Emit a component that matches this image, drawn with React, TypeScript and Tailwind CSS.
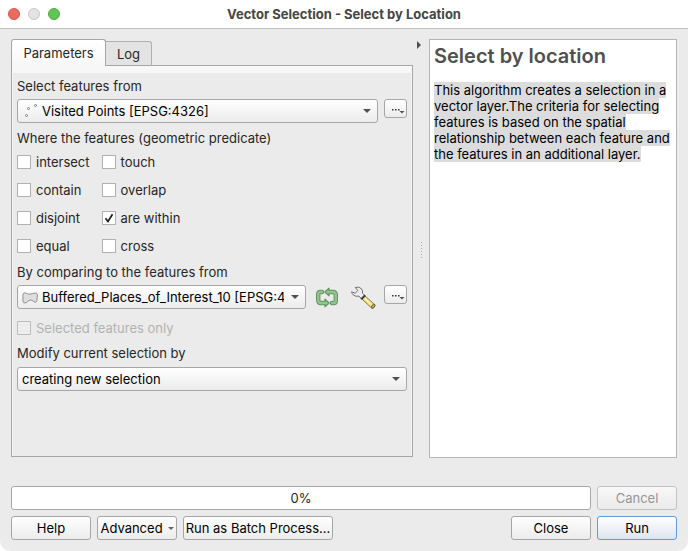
import { useState } from "react";
import type { ButtonHTMLAttributes, ReactNode, SelectHTMLAttributes } from "react";

const face = "rounded-[3px] border border-[#a6a6a6] bg-linear-to-b from-white to-[#ececec]";

function PushButton({ className = "", children, ...rest }: ButtonHTMLAttributes<HTMLButtonElement>) {
  return (
    <button
      type="button"
      className={`flex h-6 shrink-0 items-center justify-center whitespace-nowrap rounded-[3px] border ${className}`}
      {...rest}
    >
      {children}
    </button>
  );
}

function Caret({ className }: { className: string }) {
  return (
    <svg viewBox="0 0 8 4" className={className} aria-hidden="true">
      <path d="M0 0h8L4 4z" fill="currentColor" />
    </svg>
  );
}

function ComboBox({
  icon,
  options,
  className = "",
  ...rest
}: { icon?: ReactNode; options: string[] } & SelectHTMLAttributes<HTMLSelectElement>) {
  return (
    <div className={`relative min-w-0 flex-1 ${className}`}>
      <select
        className={`block h-6 w-full appearance-none pr-[21px] text-black ${icon ? "pl-6" : "pl-1"} ${face}`}
        {...rest}
      >
        {options.map((option) => (
          <option key={option}>{option}</option>
        ))}
      </select>
      {icon && <span className="pointer-events-none absolute inset-y-0 left-1 flex items-center">{icon}</span>}
      <Caret className="pointer-events-none absolute top-[10px] right-[7px] h-1 w-2 text-[#505050]" />
    </div>
  );
}

function MoreButton({ label }: { label: string }) {
  return (
    <button
      type="button"
      aria-label={label}
      className={`flex h-[19px] w-[23px] shrink-0 items-center justify-end pr-px ${face}`}
    >
      <svg viewBox="0 0 14 7" className="mt-[6px] h-[7px] w-[14px]" aria-hidden="true">
        <path d="M1 1h1.500v1.500H1zM4 1h1.500v1.500H4zM7 1h1.500v1.500H7z" fill="#333" />
        <path d="M8.500 3h5L11 5.500z" fill="#505050" />
      </svg>
    </button>
  );
}

function CheckBox({
  label,
  defaultChecked = false,
  disabled = false,
}: {
  label: string;
  defaultChecked?: boolean;
  disabled?: boolean;
}) {
  return (
    <label className={`relative flex h-4 items-center gap-[5px] whitespace-nowrap ${disabled ? "text-[#b2b2b2]" : ""}`}>
      <input
        type="checkbox"
        defaultChecked={defaultChecked}
        disabled={disabled}
        className="peer size-[14px] shrink-0 appearance-none border border-[#b0b0b0] bg-white disabled:border-[#bdbdbd] disabled:bg-[#ededed]"
      />
      <svg
        viewBox="0 0 14 14"
        className="pointer-events-none absolute top-px left-0 hidden size-[14px] peer-checked:block"
        fill="none"
        stroke="#222"
        strokeWidth="1.8"
        aria-hidden="true"
      >
        <path d="M3.500 7.200 6 10.500 10.500 3.200" />
      </svg>
      <span>{label}</span>
    </label>
  );
}

function PointsIcon() {
  return (
    <svg viewBox="0 0 16 16" className="size-4" fill="#f6f6f6" stroke="#777" strokeWidth="0.9" aria-hidden="true">
      <circle cx="5.500" cy="12.500" r="1" />
      <circle cx="7.500" cy="5.500" r="1" />
      <circle cx="14.500" cy="2.500" r="1" />
    </svg>
  );
}

function PolygonIcon() {
  return (
    <svg viewBox="0 0 18 14" className="h-[14px] w-[18px]" aria-hidden="true">
      <path
        d="M3.200 2C5 1.500 6 3.200 8.500 3.200S12.500 2 14.500 2s2.200 2.500 1.700 4.500.3 4.500-1.700 4.700-2.700-2.400-5-2.200S6.200 12 3.800 12 2 9.500 2 7 1.200 2.600 3.200 2z"
        fill="#dedede"
        stroke="#858585"
        strokeWidth="0.9"
      />
    </svg>
  );
}

function IterateIcon() {
  return (
    <svg viewBox="0 0 24 22" className="h-[22px] w-6" strokeLinejoin="round" aria-hidden="true">
      <g fill="none" stroke="#5f9460" strokeWidth="4.400" strokeLinecap="round">
        <path d="M7 5H5.500Q3.200 5 3.200 7.300v5.400Q3.200 16 6 16h5" />
        <path d="M17 16h1.500q2.300 0 2.300-2.300V8.300Q20.800 5 18 5h-5" />
      </g>
      <path d="M9.800 5 14 1.200V8.800zM14.200 16 10 12.200v7.600z" fill="#93c490" stroke="#5f9460" strokeWidth="1.200" />
      <g fill="none" stroke="#93c490" strokeWidth="2.400" strokeLinecap="round">
        <path d="M7 5H5.500Q3.200 5 3.200 7.300v5.400Q3.200 16 6 16h5" />
        <path d="M17 16h1.500q2.300 0 2.300-2.300V8.300Q20.800 5 18 5h-5" />
      </g>
    </svg>
  );
}

function WrenchIcon() {
  return (
    <svg viewBox="0 0 26 24" className="h-6 w-[26px]" strokeLinejoin="round" aria-hidden="true">
      <path d="M11.500 12.500 14.500 9.500 24.500 18.500q.8 1.200-.4 2.600-1.300 1.400-2.600.9z" fill="#efdf86" stroke="#857a48" strokeWidth="1" />
      <path d="M22 22.200q-1.500-1.500.2-3.200 1.200-1.100 2.500-.5.800 1.300-.5 2.800-1.100 1.200-2.200.9z" fill="#c6ae59" stroke="#55502f" strokeWidth="0.900" />
      <path
        d="M5.200 1.500Q9.200.2 11.500 2.800q1.500 2 1 4.500l2.500 2.500-3.300 3.300-2.700-3Q5.800 11 3.300 9 1.800 7.600 1.600 5.800l3.600 1.400 2.700-2.600z"
        fill="#ededeb"
        stroke="#6f6f6f"
        strokeWidth="1"
      />
      <path d="M11.200 13.200 15.200 9.300" stroke="#3e3e3e" strokeWidth="2" />
      <path d="m15 12.500 7 6.500" stroke="#fff3b2" strokeWidth="1.200" />
    </svg>
  );
}

const predicates = ["intersect", "touch", "contain", "overlap", "disjoint", "are within", "equal", "cross"];

export default function App() {
  const [tab, setTab] = useState("Parameters");

  return (
    <div className="flex min-h-screen flex-col bg-white font-['Inter','Liberation_Sans',sans-serif] text-[13px] leading-4 text-[#262626]">
      <header className="grid h-[29px] shrink-0 grid-cols-[1fr_auto_1fr] items-center border-b border-[#c2c2c2] bg-white px-2">
        <div className="flex gap-2">
          <button type="button" aria-label="Close window" className="size-3 rounded-full border border-[#d9534a] bg-[#ed6a5e]" />
          <button type="button" aria-label="Minimize" disabled className="size-3 rounded-full border border-[#c9c9c9] bg-[#e3e3e3]" />
          <button type="button" aria-label="Zoom" className="size-3 rounded-full border border-[#52a842] bg-[#61c554]" />
        </div>
        <h1 className="font-bold text-[#454545]">Vector Selection - Select by Location</h1>
      </header>

      <main className="flex flex-1 flex-col rounded-b-[10px] bg-[#ebebeb] px-[11px] pt-[10px] pb-[11px]">
        <div className="flex flex-1">
          <section className="mb-px flex min-w-0 flex-1 flex-col">
            <div role="tablist" className="z-10 -mb-px flex h-[27px] items-end">
              <button
                type="button"
                role="tab"
                aria-selected={tab === "Parameters"}
                onClick={() => setTab("Parameters")}
                className="h-[27px] w-[95px] rounded-t-[3px] border border-b-0 border-[#a6a6a6] bg-linear-to-b from-white to-[#f7f7f7]"
              >
                Parameters
              </button>
              <button
                type="button"
                role="tab"
                aria-selected={tab === "Log"}
                onClick={() => setTab("Log")}
                className="h-[25px] w-[46px] rounded-tr-[3px] border border-l-0 border-[#b0b0b0] border-b-[#a6a6a6] bg-[#e3e3e3]"
              >
                Log
              </button>
            </div>

            <div role="tabpanel" className="flex flex-1 flex-col border border-[#a6a6a6] bg-[#f7f7f7] px-px pt-[7px]">
              <form className="flex flex-1 flex-col bg-[#ebebeb] px-1 pt-[5px]">
                <label htmlFor="source">Select features from</label>
                <div className="mt-[5px] flex gap-[6px]">
                  <ComboBox id="source" icon={<PointsIcon />} options={["Visited Points [EPSG:4326]"]} />
                  <MoreButton label="Source options" />
                </div>

                <fieldset className="mt-[7px]">
                  <legend>Where the features (geometric predicate)</legend>
                  <div className="mt-2 grid grid-cols-[max-content_max-content] gap-x-3 gap-y-3">
                    {predicates.map((name) => (
                      <CheckBox key={name} label={name} defaultChecked={name === "are within"} />
                    ))}
                  </div>
                </fieldset>

                <label htmlFor="compare" className="mt-[10px]">
                  By comparing to the features from
                </label>
                <div className="mt-[5px] flex">
                  <ComboBox
                    id="compare"
                    icon={<PolygonIcon />}
                    options={["Buffered_Places_of_Interest_10 [EPSG:4326]"]}
                  />
                  <button type="button" aria-label="Iterate over this layer" className="ml-[9px] flex h-[26px] items-center">
                    <IterateIcon />
                  </button>
                  <button type="button" aria-label="Advanced options" className="ml-[11px] flex h-[26px] items-center">
                    <WrenchIcon />
                  </button>
                  <span className="ml-2 flex">
                    <MoreButton label="Comparison options" />
                  </span>
                </div>
                <div className="mt-[9px] flex">
                  <CheckBox label="Selected features only" disabled />
                </div>

                <label htmlFor="modify" className="mt-[9px]">
                  Modify current selection by
                </label>
                <div className="mt-[6px] flex">
                  <ComboBox
                    id="modify"
                    options={[
                      "creating new selection",
                      "adding to current selection",
                      "selecting within current selection",
                      "removing from current selection",
                    ]}
                  />
                </div>
              </form>
            </div>
          </section>

          <div className="flex w-4 shrink-0 flex-col items-center">
            <button type="button" aria-label="Collapse help" className="mt-[2px] mr-1 flex">
              <svg viewBox="0 0 4 8" className="h-2 w-1" aria-hidden="true">
                <path d="M0 0v8l4-4z" fill="#505050" />
              </svg>
            </button>
            <div className="mb-2 flex flex-1 flex-col justify-center gap-[2px]">
              {[0, 1, 2, 3, 4, 5].map((dot) => (
                <i key={dot} className="size-px bg-[#a8a8a8]" />
              ))}
            </div>
          </div>

          <article className="w-[248px] shrink-0 border border-[#b4b4b4] bg-white px-1 pt-1 text-black">
            <h2 className="text-[20px] leading-6 font-semibold text-[#505050]">Select by location</h2>
            <p className="mt-[14px]">
              <span className="bg-[#dcdcdc]">
                This algorithm creates a selection in a vector layer.The criteria for selecting features is based on the
                spatial relationship between each feature and the features in an additional layer.
              </span>
            </p>
          </article>
        </div>

        <footer className="mt-7 flex flex-col gap-[6px] text-black">
          <div className="flex gap-[6px]">
            <div
              role="progressbar"
              aria-label="Progress"
              aria-valuenow={0}
              aria-valuemin={0}
              aria-valuemax={100}
              className="flex h-6 flex-1 items-center justify-center rounded-[3px] border border-[#a6a6a6] bg-white text-[#262626]"
            >
              0%
            </div>
            <PushButton disabled className="w-20 border-[#c2c2c2] bg-linear-to-b from-[#f8f8f8] to-[#ebebeb] text-[#969696]">
              Cancel
            </PushButton>
          </div>
          <div className="flex gap-[6px]">
            <PushButton className="w-20 border-[#a6a6a6] bg-linear-to-b from-white to-[#ececec]">Help</PushButton>
            <PushButton className="w-20 gap-[5px] border-[#a6a6a6] bg-linear-to-b from-white to-[#ececec]">
              Advanced
              <Caret className="h-[3px] w-[6px] text-[#666]" />
            </PushButton>
            <PushButton className="w-[150px] border-[#a6a6a6] bg-linear-to-b from-white to-[#ececec]">
              Run as Batch Process...
            </PushButton>
            <PushButton className="ml-auto w-20 border-[#a6a6a6] bg-linear-to-b from-white to-[#ececec]">Close</PushButton>
            <PushButton className="w-20 border-[#5e9be0] bg-linear-to-b from-white to-[#dfe4ec]">Run</PushButton>
          </div>
        </footer>
      </main>
    </div>
  );
}
